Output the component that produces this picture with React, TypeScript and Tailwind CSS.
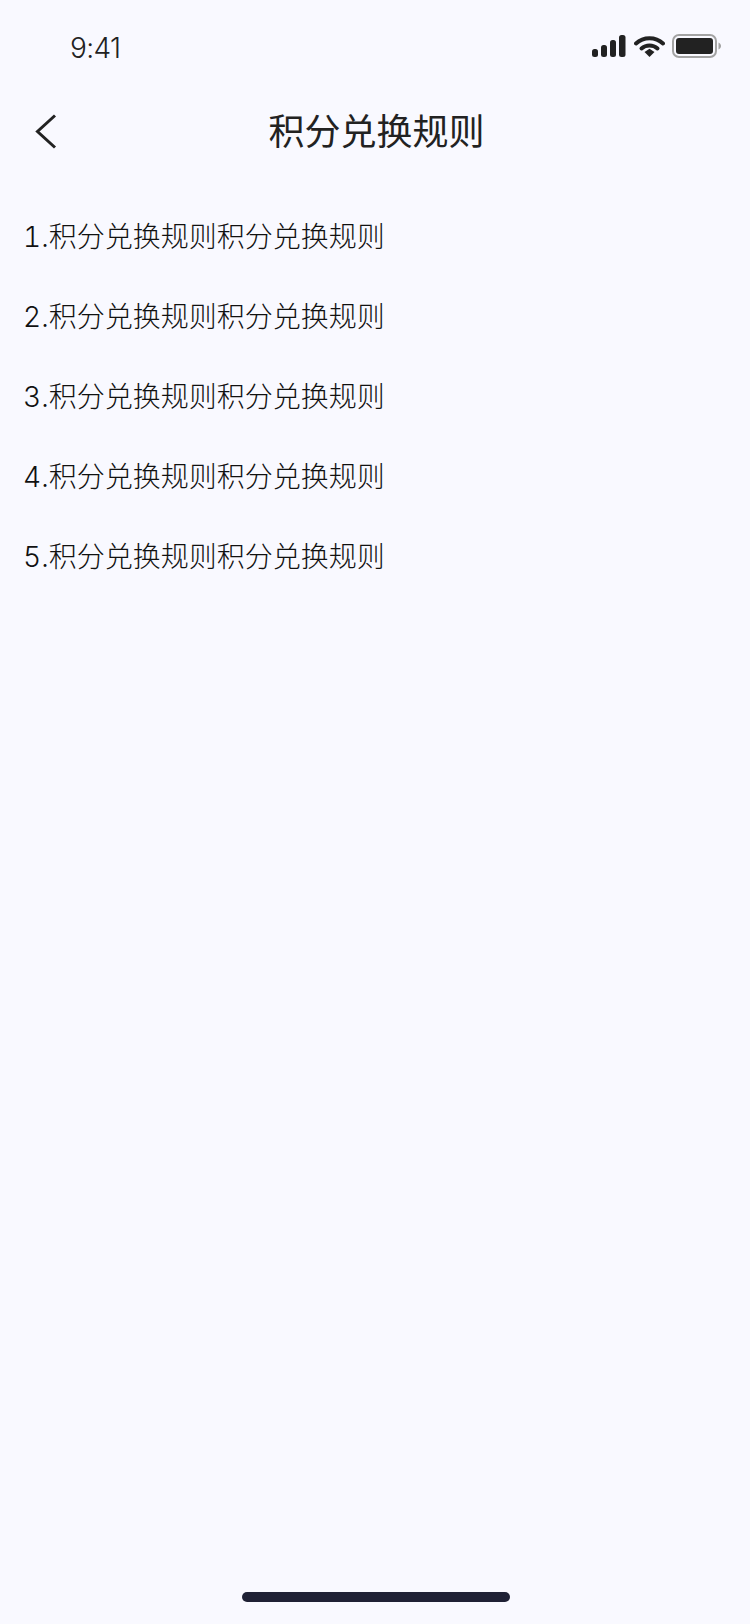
const rules = [1, 2, 3, 4, 5];

const cjk = 'font-["Inter","Noto_Sans_CJK_SC",sans-serif]';

function StatusIcons() {
  return (
    <div className="flex items-center">
      <svg width="34" height="22" viewBox="0 0 34 22" fill="#222222">
        <rect x="0" y="14" width="6" height="8" rx="2.5" />
        <rect x="9" y="10" width="6" height="12" rx="2.5" />
        <rect x="18" y="5" width="6" height="17" rx="2.5" />
        <rect x="27" y="0" width="6.5" height="22" rx="2.5" />
      </svg>
      <svg className="ml-[8px]" width="31" height="22" viewBox="0 0 31 22" fill="none">
        <path d="M2 8.5C9.5 1.5 21.5 1.5 29 8.5" stroke="#222222" strokeWidth="4" strokeLinecap="round" />
        <path d="M7.5 13.5C12 9.5 19 9.5 23.5 13.5" stroke="#222222" strokeWidth="4" strokeLinecap="round" />
        <path d="M10.5 17L15.5 13.8L20.5 17L15.5 22Z" fill="#222222" />
      </svg>
      <svg className="ml-[7px]" width="49" height="24" viewBox="0 0 49 24" fill="none">
        <rect x="1" y="1" width="43" height="22" rx="6" stroke="#a3a3a3" strokeWidth="2" />
        <rect x="4" y="4" width="37" height="16" rx="3" fill="#222222" />
        <path d="M46.5 8.5C48.2 9.2 49 10.5 49 12C49 13.5 48.2 14.8 46.5 15.5Z" fill="#a3a3a3" />
      </svg>
    </div>
  );
}

export default function App() {
  return (
    <div className={`flex h-[1624px] w-[750px] flex-col bg-[#f9f9ff] text-[#222222] ${cjk}`}>
      <div className="flex h-[88px] items-start justify-between pl-[70px] pr-[29px] pt-[34px]">
        <span className="text-[28px] font-light leading-[28px] tracking-[-0.6px]">9:41</span>
        <StatusIcons />
      </div>

      <div className="grid h-[88px] grid-cols-[1fr_auto_1fr] items-center">
        <div className="pl-[34px]">
          <svg width="24" height="36" viewBox="0 0 24 36" fill="none">
            <path d="M21 1.5L3.5 17.5L21 33.5" stroke="#222222" strokeWidth="3" />
          </svg>
        </div>
        <h1 className="pl-[3px] text-[36px] font-normal leading-[48px]">积分兑换规则</h1>
        <div />
      </div>

      <ul className="mt-[21px] pl-[23px]">
        {rules.map((n) => (
          <li key={n} className="flex h-[80px] items-center text-[28px] font-light tabular-nums text-[#111111]">
            {n}.积分兑换规则积分兑换规则
          </li>
        ))}
      </ul>

      <div className="mt-auto flex justify-center pb-[22px]">
        <div className="ml-[1px] h-[10px] w-[268px] rounded-full bg-[#1f2135]" />
      </div>
    </div>
  );
}
